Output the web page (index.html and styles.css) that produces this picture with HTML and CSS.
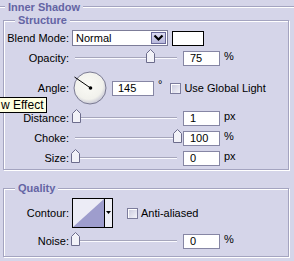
FILE: index.html
```html
<!DOCTYPE html>
<html lang="en">
<head>
  <meta charset="UTF-8">
  <title>Inner Shadow</title>
  <link rel="stylesheet" href="styles.css">
</head>
<body>
  <div class="panel">
    <div class="section-head">
      <span class="rule short"></span>
      <span class="section-title">Inner Shadow</span>
      <span class="rule"></span>
    </div>

    <div class="group structure">
      <div class="legend">Structure</div>

      <div class="row first">
        <label class="label">Blend Mode:</label>
        <div class="select">
          <span class="select-text">Normal</span>
          <span class="select-btn">
            <svg width="11" height="8" viewBox="0 0 11 8"><path d="M1.5 1.5 L5.5 5.5 L9.5 1.5" fill="none" stroke="#000" stroke-width="2.2"/></svg>
          </span>
        </div>
        <div class="swatch"></div>
      </div>

      <div class="row">
        <label class="label">Opacity:</label>
        <div class="slider"><div class="track"><span class="thumb" style="--v: 74%"></span></div></div>
        <input class="num" value="75">
        <span class="unit">%</span>
      </div>

      <div class="row angle">
        <label class="label">Angle:</label>
        <svg class="dial" width="34" height="34" viewBox="0 0 34 34">
          <defs>
            <radialGradient id="dialFill" cx="45%" cy="40%" r="60%">
              <stop offset="0" stop-color="#fbfbf6"/>
              <stop offset="0.75" stop-color="#f1f1ec"/>
              <stop offset="1" stop-color="#c9c9d6"/>
            </radialGradient>
          </defs>
          <circle cx="17" cy="17" r="16" fill="url(#dialFill)" stroke="#7a7a92" stroke-width="1"/>
          <line x1="17.5" y1="17" x2="1.5" y2="6" stroke="#000" stroke-width="1"/>
          <circle cx="17.5" cy="17" r="1.8" fill="#000"/>
        </svg>
        <input class="num wide" value="145">
        <span class="unit deg">°</span>
        <span class="check"></span>
        <span class="check-label">Use Global Light</span>
      </div>

      <div class="row after-angle">
        <label class="label">Distance:</label>
        <div class="slider"><div class="track"><span class="thumb" style="--v: 1%"></span></div></div>
        <input class="num" value="1">
        <span class="unit">px</span>
      </div>

      <div class="row">
        <label class="label">Choke:</label>
        <div class="slider"><div class="track"><span class="thumb" style="--v: 100%"></span></div></div>
        <input class="num" value="100">
        <span class="unit">%</span>
      </div>

      <div class="row">
        <label class="label">Size:</label>
        <div class="slider"><div class="track"><span class="thumb" style="--v: 0%"></span></div></div>
        <input class="num" value="0">
        <span class="unit">px</span>
      </div>
    </div>

    <div class="group quality">
      <div class="legend">Quality</div>

      <div class="row contour-row">
        <label class="label">Contour:</label>
        <div class="contour">
          <svg class="contour-preview" width="31" height="28" viewBox="0 0 31 28">
            <rect width="31" height="28" fill="#ececf6"/>
            <polygon points="0,28 31,0 31,28" fill="#9e9dcd"/>
          </svg>
          <span class="contour-btn">
            <svg width="5" height="3" viewBox="0 0 5 3"><path d="M0 0 H5 L2.5 3 Z" fill="#000"/></svg>
          </span>
        </div>
        <span class="check"></span>
        <span class="check-label">Anti-aliased</span>
      </div>

      <div class="row noise-row">
        <label class="label">Noise:</label>
        <div class="slider"><div class="track"><span class="thumb" style="--v: 0%"></span></div></div>
        <input class="num" value="0">
        <span class="unit">%</span>
      </div>
    </div>

    <div class="tooltip">w Effect</div>
  </div>
</body>
</html>
```

FILE: styles.css
```css
body {
  margin: 0;
  background: #d5d5e9;
  color: #000;
  font-family: "Liberation Sans", Arial, sans-serif;
  font-size: 11px;
  overflow: hidden;
}

.panel {
  position: relative;
  width: 294px;
  height: 261px;
}

.section-head {
  display: flex;
  align-items: center;
  height: 14px;
}

.section-title {
  color: #6464a4;
  font-weight: bold;
  padding: 0 3px;
  line-height: 14px;
}

.rule {
  flex: 1;
  height: 0;
  border-top: 1px solid #a4a4c0;
  border-bottom: 1px solid #fff;
}

.rule.short {
  flex: 0 0 5px;
}

.group {
  margin: 6px 5px 0 3px;
  border: 1px solid #a4a4c0;
  box-shadow: inset 1px 1px 0 #fff, 1px 1px 0 #fff;
  padding-bottom: 3px;
}

.quality {
  margin-top: 18px;
  padding-bottom: 7px;
}

.legend {
  width: fit-content;
  margin: -7px 0 0 11px;
  padding: 0 3px;
  line-height: 13px;
  background: #d5d5e9;
  color: #6464a4;
  font-weight: bold;
}

.row {
  display: flex;
  align-items: center;
  height: 16px;
  margin-top: 4px;
}

.row.first {
  margin-top: 3px;
}

.row.angle {
  height: 34px;
  margin-top: 5px;
}

.row.after-angle {
  margin-top: 5px;
}

.label {
  width: 65px;
  text-align: right;
  margin-right: 3px;
  white-space: nowrap;
}

.select {
  display: flex;
  width: 96px;
  height: 16px;
  box-sizing: border-box;
  background: #fff;
  border: 1px solid #7c7c98;
}

.select-text {
  flex: 1;
  padding-left: 3px;
  line-height: 14px;
}

.select-btn {
  display: flex;
  align-items: center;
  justify-content: center;
  width: 15px;
  margin: 1px;
  box-sizing: border-box;
  border: 1px solid #6a6a9a;
  background: linear-gradient(#dcdcf2, #b8b8dc);
}

.swatch {
  width: 32px;
  height: 15px;
  box-sizing: border-box;
  margin-left: 4px;
  background: #fff;
  border: 1px solid #000;
}

.slider {
  width: 108px;
  padding: 0 3px;
  box-sizing: border-box;
}

.track {
  position: relative;
  height: 0;
  border-top: 1px solid #a6a6bc;
  border-bottom: 1px solid #fbfbff;
}

.thumb {
  position: absolute;
  left: calc(var(--v) - 4px);
  top: -9px;
  width: 9px;
  height: 14px;
  background: url("data:image/svg+xml;utf8,<svg xmlns='http://www.w3.org/2000/svg' width='9' height='14'><path d='M0.5 13.5 V4.5 L4.5 0.5 L8.5 4.5 V13.5 Z' fill='%23f2f2f8' stroke='%236c6c8c'/></svg>") no-repeat;
}

.num {
  width: 37px;
  height: 15px;
  box-sizing: border-box;
  margin-left: 3px;
  padding: 0 0 0 6px;
  border: 1px solid #8686a4;
  background: #fff;
  font: inherit;
  color: #000;
  outline: none;
}

.num.wide {
  width: 42px;
  margin-left: 5px;
  padding-left: 5px;
}

.unit {
  margin-left: 4px;
  align-self: flex-start;
  line-height: 13px;
}

.angle .unit.deg {
  align-self: center;
  margin-top: -8px;
  margin-left: 4px;
}

.dial {
  margin-left: 1px;
}

.check {
  width: 11px;
  height: 11px;
  box-sizing: border-box;
  margin-left: 9px;
  border: 1px solid #7c7c9c;
  background: linear-gradient(135deg, #c8c8dc, #f4f4fa);
  box-shadow: inset 1px 1px 0 #fff;
}

.check-label {
  margin-left: 3px;
}

.angle .check {
  margin-left: 8px;
}

.contour-row {
  height: 30px;
  margin-top: 3px;
}

.contour {
  display: flex;
  width: 41px;
  height: 30px;
  box-sizing: border-box;
  border: 1px solid #000;
  background: #eeeef6;
}

.contour-preview {
  display: block;
}

.contour-btn {
  display: flex;
  align-items: center;
  justify-content: center;
  flex: 1;
  border-left: 1px solid #000;
  padding-bottom: 2px;
}

.contour-row .check {
  margin-left: 14px;
}

.noise-row {
  margin-top: 5px;
}

.tooltip {
  position: absolute;
  left: -1px;
  top: 97px;
  height: 16px;
  box-sizing: border-box;
  padding: 0 3px 0 1px;
  border: 1px solid #000;
  background: #ffffe1;
  font-size: 12px;
  line-height: 14px;
  white-space: nowrap;
}
```
